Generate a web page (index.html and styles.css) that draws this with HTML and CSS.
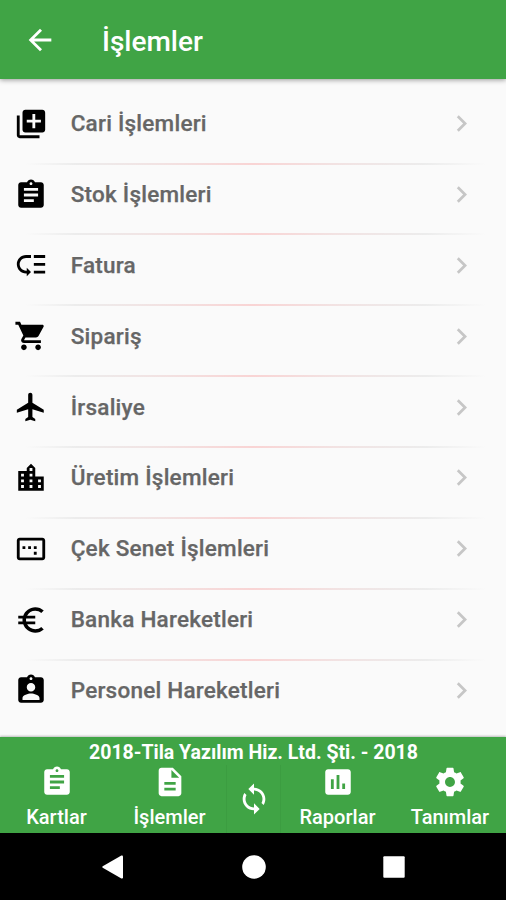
FILE: index.html
```html
<!DOCTYPE html>
<html lang="tr">
<head>
<meta charset="utf-8">
<title>İşlemler</title>
<link rel="stylesheet" href="styles.css">
</head>
<body>
<div class="app">
  <header class="topbar">
    <svg class="icon" viewBox="0 0 24 24"><path d="M20 11H7.83l5.59-5.59L12 4l-8 8 8 8 1.41-1.41L7.83 13H20v-2z"/></svg>
    <h1 class="title">İşlemler</h1>
  </header>
  <main class="list">
    <div class="row"><svg class="icon" viewBox="0 0 24 24"><path d="M4 6H2v14c0 1.1.9 2 2 2h14v-2H4V6zm16-4H8c-1.1 0-2 .9-2 2v12c0 1.1.9 2 2 2h12c1.1 0 2-.9 2-2V4c0-1.1-.9-2-2-2zm-1 9h-4v4h-2v-4H9V9h4V5h2v4h4v2z"/></svg><span class="label">Cari İşlemleri</span><svg class="chevron" viewBox="0 0 24 24"><path d="M10 6L8.59 7.41 13.17 12l-4.58 4.59L10 18l6-6z"/></svg></div>
    <div class="row"><svg class="icon" viewBox="0 0 24 24"><path d="M19 3h-4.18C14.4 1.84 13.3 1 12 1c-1.3 0-2.4.84-2.82 2H5c-1.1 0-2 .9-2 2v14c0 1.1.9 2 2 2h14c1.1 0 2-.9 2-2V5c0-1.1-.9-2-2-2zm-7 0c.55 0 1 .45 1 1s-.45 1-1 1-1-.45-1-1 .45-1 1-1zm2 14H7v-2h7v2zm3-4H7v-2h10v2zm0-4H7V7h10v2z"/></svg><span class="label">Stok İşlemleri</span><svg class="chevron" viewBox="0 0 24 24"><path d="M10 6L8.59 7.41 13.17 12l-4.58 4.59L10 18l6-6z"/></svg></div>
    <div class="row"><svg class="icon" viewBox="0 0 24 24"><path d="M14 5h8v2h-8zm0 5.5h8v2h-8zm0 5.5h8v2h-8zM2 11.5C2 15.08 4.92 18 8.5 18H9v2l3-3-3-3v2h-.5C6.02 16 4 13.98 4 11.5S6.02 7 8.5 7H12V5H8.5C4.92 5 2 7.92 2 11.5z"/></svg><span class="label">Fatura</span><svg class="chevron" viewBox="0 0 24 24"><path d="M10 6L8.59 7.41 13.17 12l-4.58 4.59L10 18l6-6z"/></svg></div>
    <div class="row"><svg class="icon" viewBox="0 0 24 24"><path d="M7 18c-1.1 0-1.99.9-1.99 2S5.9 22 7 22s2-.9 2-2-.9-2-2-2zM1 2v2h2l3.6 7.59-1.35 2.45c-.16.28-.25.61-.25.96 0 1.1.9 2 2 2h12v-2H7.42c-.14 0-.25-.11-.25-.25l.03-.12.9-1.63h7.45c.75 0 1.41-.41 1.75-1.03l3.58-6.49c.08-.14.12-.31.12-.48 0-.55-.45-1-1-1H5.21l-.94-2H1zm16 16c-1.1 0-1.99.9-1.99 2s.89 2 1.99 2 2-.9 2-2-.9-2-2-2z"/></svg><span class="label">Sipariş</span><svg class="chevron" viewBox="0 0 24 24"><path d="M10 6L8.59 7.41 13.17 12l-4.58 4.59L10 18l6-6z"/></svg></div>
    <div class="row"><svg class="icon" viewBox="0 0 24 24"><path d="M21 16v-2l-8-5V3.5c0-.83-.67-1.5-1.5-1.5S10 2.67 10 3.5V9l-8 5v2l8-2.5V19l-2 1.5V22l3.5-1 3.5 1v-1.5L13 19v-5.5l8 2.5z"/></svg><span class="label">İrsaliye</span><svg class="chevron" viewBox="0 0 24 24"><path d="M10 6L8.59 7.41 13.17 12l-4.58 4.59L10 18l6-6z"/></svg></div>
    <div class="row"><svg class="icon" viewBox="0 0 24 24"><path d="M15 11V5l-3-3-3 3v2H3v14h18V11h-6zm-8 8H5v-2h2v2zm0-4H5v-2h2v2zm0-4H5V9h2v2zm6 8h-2v-2h2v2zm0-4h-2v-2h2v2zm0-4h-2V9h2v2zm0-4h-2V5h2v2zm6 12h-2v-2h2v2zm0-4h-2v-2h2v2z"/></svg><span class="label">Üretim İşlemleri</span><svg class="chevron" viewBox="0 0 24 24"><path d="M10 6L8.59 7.41 13.17 12l-4.58 4.59L10 18l6-6z"/></svg></div>
    <div class="row"><svg class="icon" viewBox="0 0 24 24"><path d="M16 10h-2v2h2v-2zm0 4h-2v2h2v-2zm-8-4H6v2h2v-2zm4 0h-2v2h2v-2zm8-6H4c-1.1 0-2 .9-2 2v12c0 1.1.9 2 2 2h16c1.1 0 2-.9 2-2V6c0-1.1-.9-2-2-2zm0 14H4V6h16v12z"/></svg><span class="label">Çek Senet İşlemleri</span><svg class="chevron" viewBox="0 0 24 24"><path d="M10 6L8.59 7.41 13.17 12l-4.58 4.59L10 18l6-6z"/></svg></div>
    <div class="row"><svg class="icon" viewBox="0 0 24 24"><path d="M15 18.5c-2.51 0-4.68-1.42-5.76-3.5H15v-2H8.58c-.05-.33-.08-.66-.08-1s.03-.67.08-1H15V9H9.24C10.32 6.92 12.5 5.5 15 5.5c1.61 0 3.09.59 4.23 1.57L21 5.3C19.41 3.87 17.3 3 15 3c-3.92 0-7.24 2.51-8.48 6H3v2h3.06c-.04.33-.06.66-.06 1s.02.67.06 1H3v2h3.52c1.24 3.49 4.56 6 8.48 6 2.31 0 4.41-.87 6-2.3l-1.78-1.77c-1.13.98-2.6 1.57-4.22 1.57z"/></svg><span class="label">Banka Hareketleri</span><svg class="chevron" viewBox="0 0 24 24"><path d="M10 6L8.59 7.41 13.17 12l-4.58 4.59L10 18l6-6z"/></svg></div>
    <div class="row"><svg class="icon" viewBox="0 0 24 24"><path d="M19 3h-4.18C14.4 1.84 13.3 1 12 1c-1.3 0-2.4.84-2.82 2H5c-1.1 0-2 .9-2 2v14c0 1.1.9 2 2 2h14c1.1 0 2-.9 2-2V5c0-1.1-.9-2-2-2zm-7 0c.55 0 1 .45 1 1s-.45 1-1 1-1-.45-1-1 .45-1 1-1zm0 4c1.66 0 3 1.34 3 3s-1.34 3-3 3-3-1.34-3-3 1.34-3 3-3zm6 12H6v-1.4c0-2 4-3.1 6-3.1s6 1.1 6 3.1V19z"/></svg><span class="label">Personel Hareketleri</span><svg class="chevron" viewBox="0 0 24 24"><path d="M10 6L8.59 7.41 13.17 12l-4.58 4.59L10 18l6-6z"/></svg></div>
  </main>
  <footer class="footer">
    <div class="company">2018-Tila Yazılım Hiz. Ltd. Şti. - 2018</div>
    <nav class="tabs">
      <div class="tab"><svg class="icon" viewBox="0 0 24 24"><path d="M19 3h-4.18C14.4 1.84 13.3 1 12 1c-1.3 0-2.4.84-2.82 2H5c-1.1 0-2 .9-2 2v14c0 1.1.9 2 2 2h14c1.1 0 2-.9 2-2V5c0-1.1-.9-2-2-2zm-7 0c.55 0 1 .45 1 1s-.45 1-1 1-1-.45-1-1 .45-1 1-1zm2 14H7v-2h7v2zm3-4H7v-2h10v2zm0-4H7V7h10v2z"/></svg><span>Kartlar</span></div>
      <div class="tab"><svg class="icon" viewBox="0 0 24 24"><path d="M14 2H6c-1.1 0-1.99.9-1.99 2L4 20c0 1.1.89 2 1.99 2H18c1.1 0 2-.9 2-2V8l-6-6zm2 16H8v-2h8v2zm0-4H8v-2h8v2zm-3-5V3.5L18.5 9H13z"/></svg><span>İşlemler</span></div>
      <div class="tab sync"><svg class="icon" viewBox="0 0 24 24"><path d="M12 4V1L8 5l4 4V6c3.31 0 6 2.69 6 6 0 1.01-.25 1.97-.7 2.8l1.46 1.46C19.54 15.03 20 13.57 20 12c0-4.42-3.58-8-8-8zm0 14c-3.31 0-6-2.69-6-6 0-1.01.25-1.97.7-2.8L5.24 7.74C4.46 8.97 4 10.43 4 12c0 4.42 3.58 8 8 8v3l4-4-4-4v3z"/></svg></div>
      <div class="tab"><svg class="icon" viewBox="0 0 24 24"><path d="M19 3H5c-1.1 0-2 .9-2 2v14c0 1.1.9 2 2 2h14c1.1 0 2-.9 2-2V5c0-1.1-.9-2-2-2zM9 17H7v-7h2v7zm4 0h-2V7h2v10zm4 0h-2v-4h2v4z"/></svg><span>Raporlar</span></div>
      <div class="tab"><svg class="icon" viewBox="0 0 24 24"><path d="M19.43 12.98c.04-.32.07-.64.07-.98s-.03-.66-.07-.98l2.11-1.65c.19-.15.24-.42.12-.64l-2-3.46c-.12-.22-.39-.3-.61-.22l-2.49 1c-.52-.4-1.08-.73-1.69-.98l-.38-2.65C14.46 2.18 14.25 2 14 2h-4c-.25 0-.46.18-.49.42l-.38 2.65c-.61.25-1.17.59-1.69.98l-2.49-1c-.23-.09-.49 0-.61.22l-2 3.46c-.13.22-.07.49.12.64l2.11 1.65c-.04.32-.07.65-.07.98s.03.66.07.98l-2.11 1.65c-.19.15-.24.42-.12.64l2 3.46c.12.22.39.3.61.22l2.49-1c.52.4 1.08.73 1.69.98l.38 2.65c.03.24.24.42.49.42h4c.25 0 .46-.18.49-.42l.38-2.65c.61-.25 1.17-.59 1.69-.98l2.49 1c.23.09.49 0 .61-.22l2-3.46c.12-.22.07-.49-.12-.64l-2.11-1.65zM12 15.5c-1.93 0-3.5-1.57-3.5-3.5s1.57-3.5 3.5-3.5 3.5 1.57 3.5 3.5-1.57 3.5-3.5 3.5z"/></svg><span>Tanımlar</span></div>
    </nav>
  </footer>
  <div class="sysbar">
    <svg class="key" viewBox="0 0 24 24"><path d="M1.7 11.2 20.4.6Q22 0 22 1.8V22.2Q22 24 20.4 23.4L1.7 12.8Q.7 12 1.7 11.2z"/></svg>
    <svg class="key" viewBox="0 0 24 24"><circle cx="12" cy="12" r="11.8"/></svg>
    <svg class="key" viewBox="0 0 24 24"><rect x="1.3" y="1.3" width="21.4" height="21.4" rx="1"/></svg>
  </div>
</div>
</body>
</html>
```
FILE: styles.css
```css
body {
  margin: 0;
  font-family: Roboto, sans-serif;
  font-weight: 500;
}

.app {
  display: flex;
  flex-direction: column;
  width: 506px;
  height: 900px;
  overflow: hidden;
  background: #fafafa;
}

.icon {
  display: block;
  flex: none;
  width: 34px;
  height: 34px;
  fill: currentColor;
}

.topbar {
  display: flex;
  align-items: center;
  gap: 45.5px;
  flex: none;
  box-sizing: border-box;
  height: 79px;
  padding: 1px 0 0 22.5px;
  background: #40a445;
  color: #fff;
  box-shadow: 0 1px 5px rgba(0, 0, 0, 0.4);
}

.title {
  margin: 0;
  padding-top: 3px;
  font-size: 28px;
  font-weight: 500;
  line-height: 36px;
}

.list {
  flex: 1;
  min-height: 0;
  padding-top: 14.8px;
  overflow: hidden;
}

.topbar,
.footer {
  z-index: 1;
}

.row {
  display: flex;
  align-items: center;
  box-sizing: border-box;
  height: 70.85px;
  padding: 0 28px 11px 14.2px;
  color: #000;
  background: linear-gradient(90deg, transparent 5%, #ececec 15%, #f2e2e2 32%, #f9d4d4 50%, #f2e2e2 66%, #ececec 84%, transparent 96%) bottom / 100% 2px no-repeat;
}

.row:last-child {
  background: none;
}

.label {
  flex: 1;
  margin: -1px 0 0 22.5px;
  color: #666;
  font-size: 22.5px;
  letter-spacing: 0.23px;
  line-height: 30px;
  -webkit-text-stroke: 0.25px #666;
}

.chevron {
  width: 33px;
  height: 33px;
  fill: #c6c6c6;
}

.footer {
  flex: none;
  height: 96px;
  background: #40a445;
  color: #fff;
  box-shadow: 0 -1px 2px rgba(0, 0, 0, 0.25);
}

.company {
  height: 28px;
  padding-left: 1px;
  font-size: 19.5px;
  font-weight: 700;
  line-height: 32px;
  text-align: center;
}

.tabs {
  display: grid;
  grid-template-rows: 68px;
  grid-template-columns: 113px 113px 55px 113px 112px;
  height: 68px;
}

.tab {
  display: flex;
  flex-direction: column;
  align-items: center;
  font-size: 20px;
  line-height: 36px;
}

.sync {
  justify-content: center;
  box-sizing: border-box;
  border: solid #3c9d41;
  border-width: 0 1px;
}

.sysbar {
  display: flex;
  align-items: center;
  justify-content: space-between;
  flex: none;
  box-sizing: border-box;
  height: 67px;
  padding: 0 100px 0 101px;
  background: #000;
}

.key {
  width: 24px;
  height: 24px;
  fill: #fff;
}
```
